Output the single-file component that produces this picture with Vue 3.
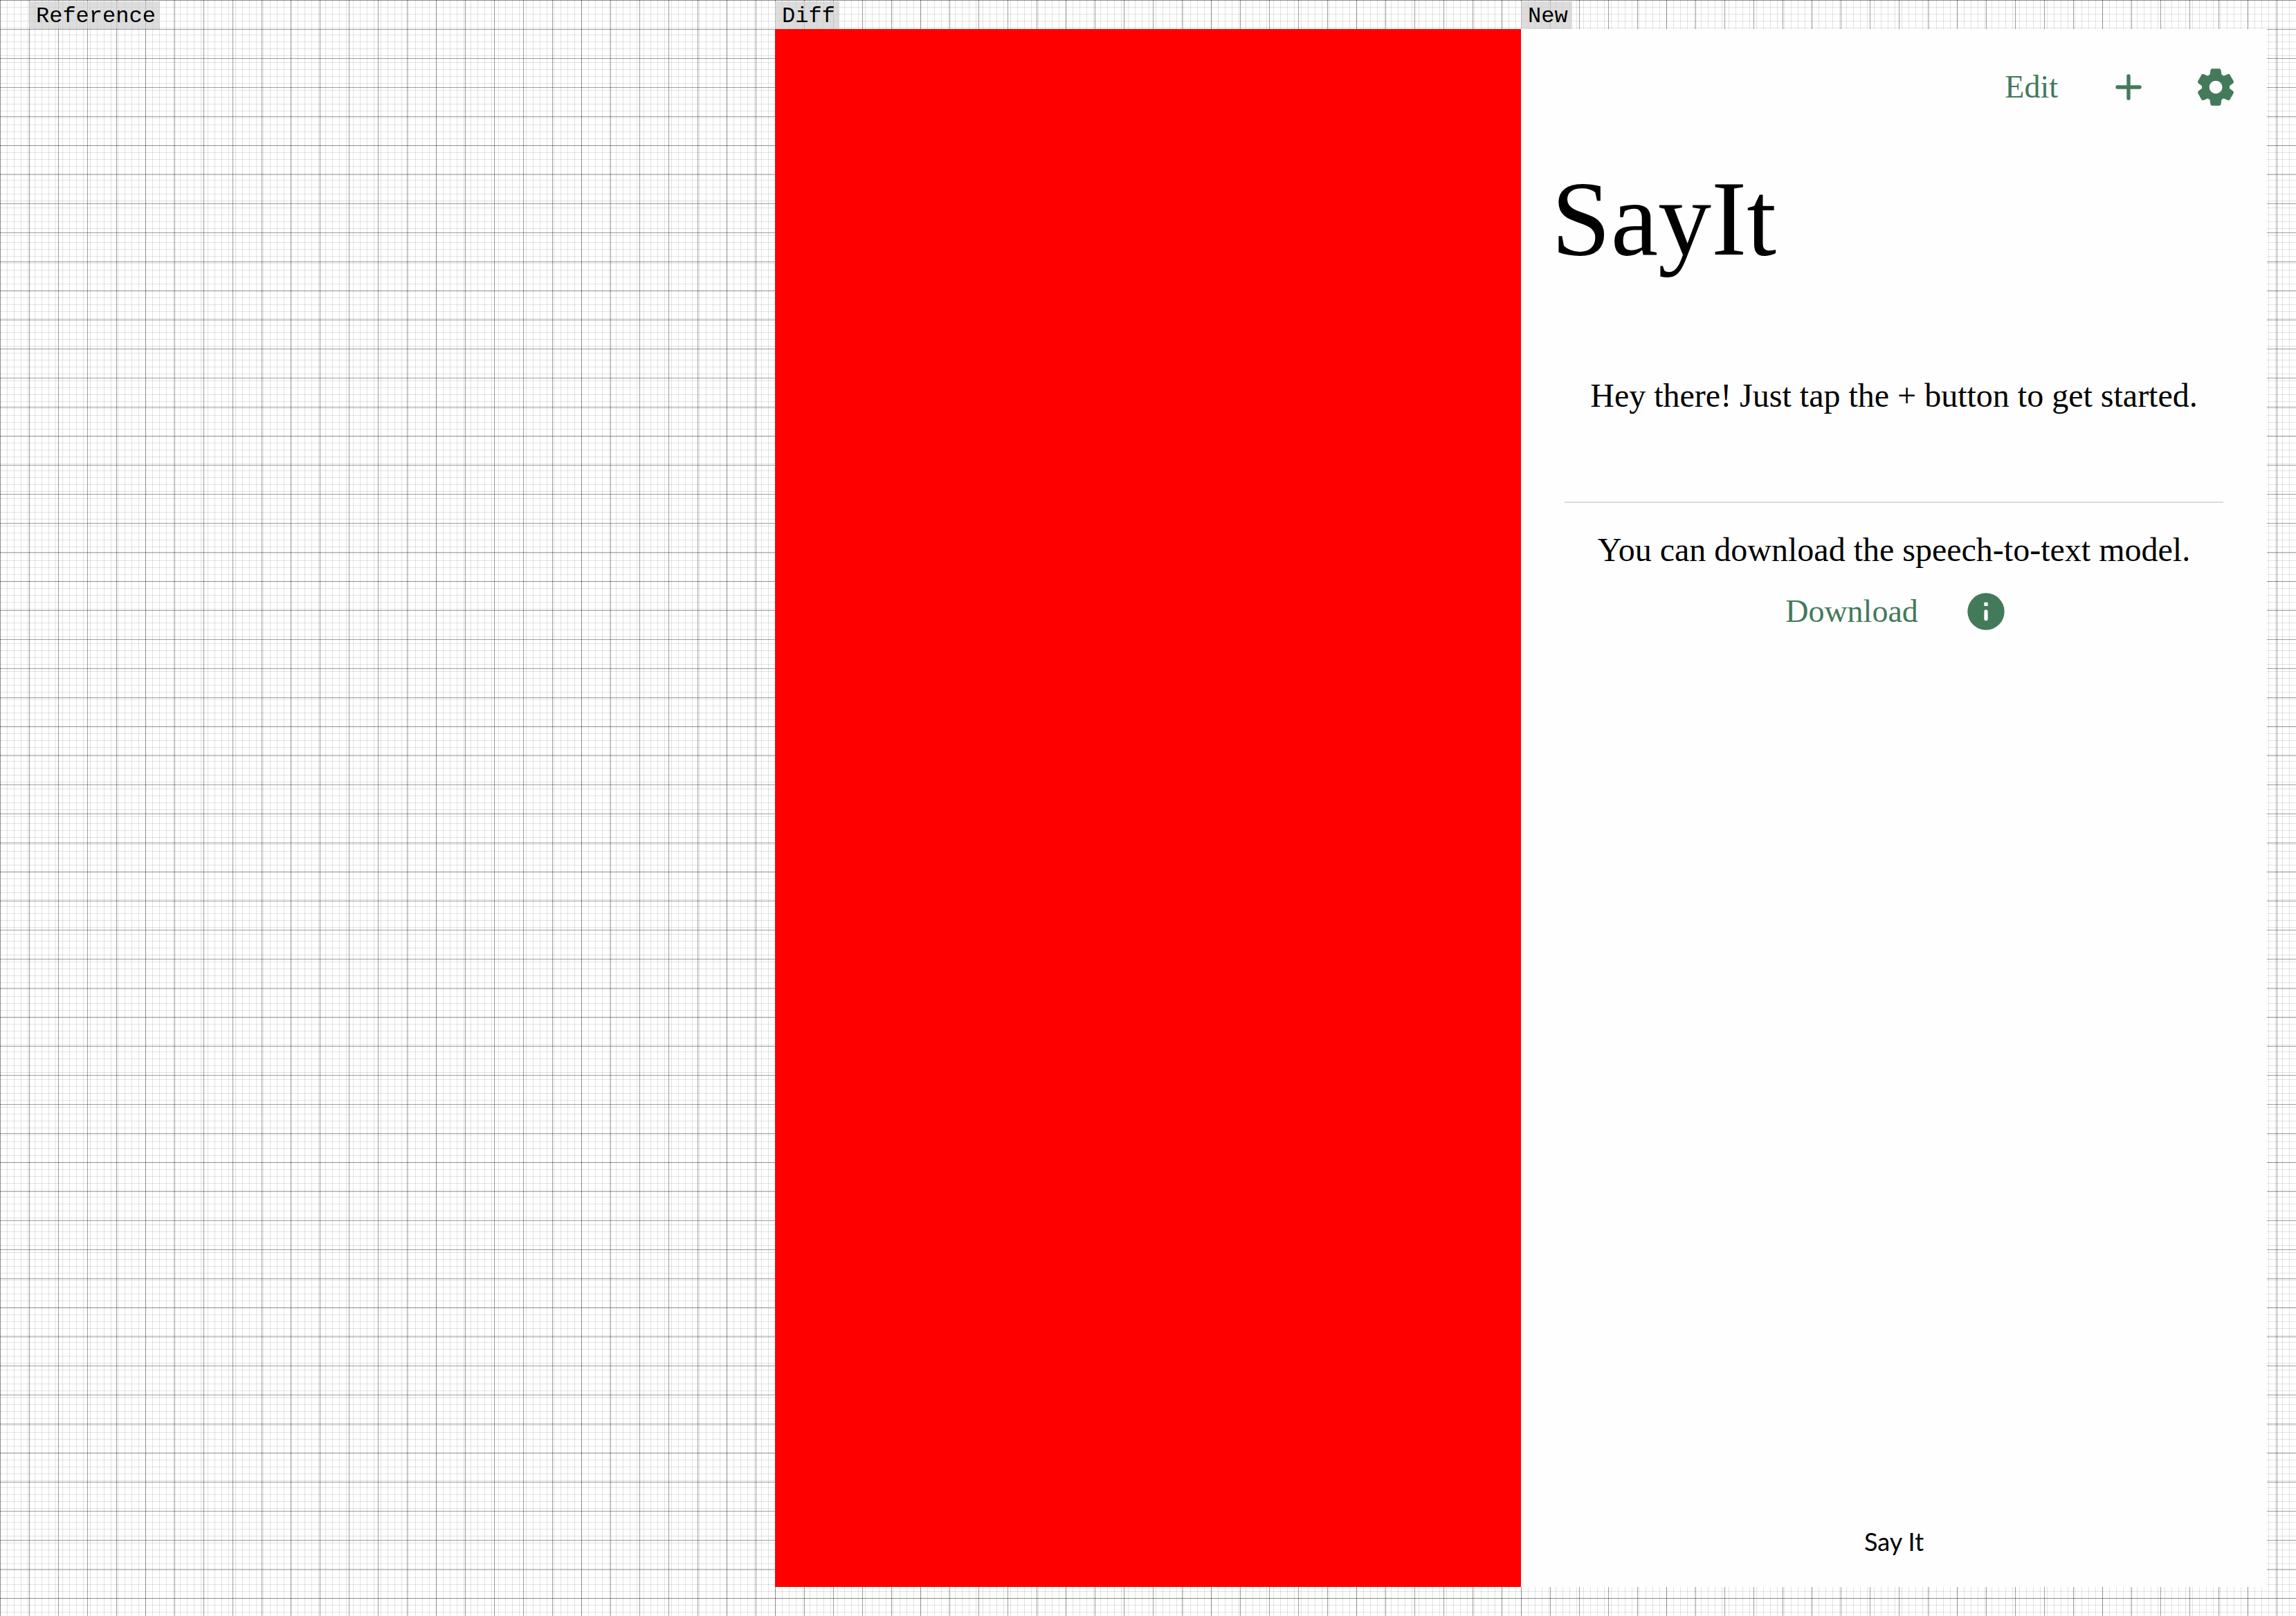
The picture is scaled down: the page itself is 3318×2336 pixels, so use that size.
<script setup>
const message = 'Hey there! Just tap the + button to get started.'
const hint = 'You can download the speech-to-text model.'
</script>

<template>
  <main class="compare">
    <section class="column first">
      <h2 class="label">Reference</h2>
      <div class="panel"></div>
    </section>
    <section class="column">
      <h2 class="label">Diff</h2>
      <div class="panel diff"></div>
    </section>
    <section class="column last">
      <h2 class="label">New</h2>
      <div class="panel screen">
        <header class="toolbar">
          <button class="text-button" type="button">Edit</button>
          <button class="icon-button" type="button" aria-label="Add">
            <svg viewBox="0 0 24 24"><path d="M12 6v12M6 12h12" fill="none" stroke="currentColor" stroke-width="2" stroke-linecap="round" /></svg>
          </button>
          <button class="icon-button" type="button" aria-label="Settings">
            <svg viewBox="0 0 24 24"><path fill="currentColor" d="M19.5 12c0-.23-.01-.45-.03-.68l1.86-1.41c.4-.3.51-.86.26-1.3l-1.87-3.23c-.25-.44-.79-.62-1.25-.42l-2.15.91c-.37-.26-.76-.49-1.17-.68l-.29-2.31c-.06-.5-.49-.88-.99-.88h-3.73c-.51 0-.94.38-1 .88l-.29 2.31c-.41.19-.8.42-1.17.68l-2.15-.91c-.46-.2-1-.02-1.25.42L2.41 8.62c-.25.44-.14.99.26 1.3l1.86 1.41c-.02.22-.03.44-.03.67s.01.45.03.68l-1.86 1.41c-.4.3-.51.86-.26 1.3l1.87 3.23c.25.44.79.62 1.25.42l2.15-.91c.37.26.76.49 1.17.68l.29 2.31c.06.5.49.88.99.88h3.73c.5 0 .93-.38.99-.88l.29-2.31c.41-.19.8-.42 1.17-.68l2.15.91c.46.2 1 .02 1.25-.42l1.87-3.23c.25-.44.14-.99-.26-1.3l-1.86-1.41c.03-.23.04-.45.04-.68zm-7.46 3.5c-1.93 0-3.5-1.57-3.5-3.5s1.57-3.5 3.5-3.5 3.5 1.57 3.5 3.5-1.57 3.5-3.5 3.5z" /></svg>
          </button>
        </header>
        <h1 class="title">SayIt</h1>
        <p class="message">{{ message }}</p>
        <hr class="rule" />
        <p class="message hint">{{ hint }}</p>
        <div class="actions">
          <button class="text-button" type="button">Download</button>
          <button class="icon-button" type="button" aria-label="Info">
            <svg viewBox="0 0 24 24"><path fill="currentColor" fill-rule="evenodd" d="M12 2a10 10 0 1 0 0 20 10 10 0 0 0 0-20zm0 15c-.55 0-1-.45-1-1v-4c0-.55.45-1 1-1s1 .45 1 1v4c0 .55-.45 1-1 1zm1-8h-2V7h2z" /></svg>
          </button>
        </div>
        <footer class="footer">Say It</footer>
      </div>
    </section>
  </main>
</template>

<style>
body {
  margin: 0;
}
</style>

<style scoped>
.compare {
  display: flex;
  min-height: 100vh;
}
.column {
  display: flex;
  flex: 1;
  flex-direction: column;
  align-items: flex-start;
  padding-bottom: 42px;
  background-color: #fff;
  background-image:
    linear-gradient(to right, #00000060 1px, transparent 1px),
    linear-gradient(to bottom, #00000060 1px, transparent 1px),
    linear-gradient(to right, #0000001c 1px, transparent 1px),
    linear-gradient(to bottom, #0000001c 1px, transparent 1px);
  background-size: 42px 42px, 42px 42px, 10px 10px, 10px 10px;
}
.first {
  padding-left: 42px;
}
.last {
  padding-right: 42px;
}
.label {
  margin: 2px 0 0;
  padding: 4px 6px 0 10px;
  background: #d0d0d0b8;
  color: #000;
  font: 32px/36px "Liberation Mono", monospace;
}
.panel {
  flex: 1;
  align-self: stretch;
}
.diff {
  background: #f00;
}
.screen {
  display: flex;
  flex-direction: column;
  background: #fefefe;
  color: #000;
  font-family: "Liberation Serif", serif;
}
button {
  padding: 0;
  border: 0;
  background: none;
  color: #437a5a;
}
.text-button {
  padding: 0 8px;
  font: 46px/60px "Liberation Serif", serif;
}
.icon-button,
.icon-button svg {
  display: block;
  width: 64px;
  height: 64px;
}
.toolbar {
  display: flex;
  align-items: center;
  justify-content: flex-end;
  gap: 62px;
  padding: 52px 42px 0 0;
}
.title {
  margin: 68px 0 0 44px;
  font-size: 154px;
  font-weight: 400;
  line-height: 180px;
}
.message {
  margin: 136px 0 0;
  font-size: 48px;
  line-height: 60px;
  text-align: center;
}
.rule {
  align-self: stretch;
  height: 2px;
  margin: 123px 63px 0;
  border: 0;
  background: #dcdcdc;
}
.hint {
  margin-top: 38px;
}
.actions {
  display: flex;
  align-items: center;
  justify-content: center;
  gap: 58px;
  margin-top: 27px;
}
.footer {
  margin-top: auto;
  padding-bottom: 42px;
  font: 36px/48px Lato, sans-serif;
  text-align: center;
}
</style>
